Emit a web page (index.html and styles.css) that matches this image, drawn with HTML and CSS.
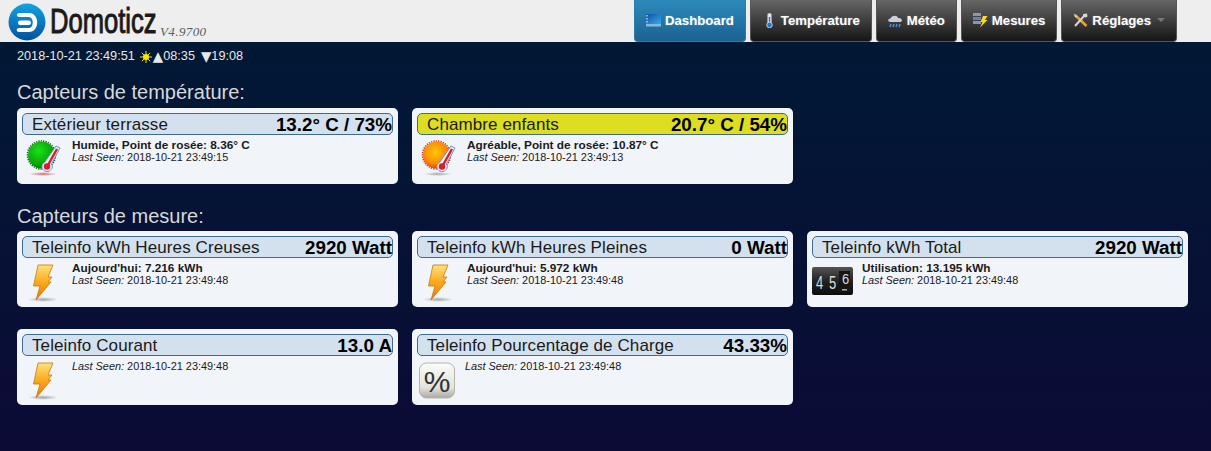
FILE: index.html
```html
<!DOCTYPE html>
<html>
<head>
  <title>Domoticz</title>
  <link rel="stylesheet" href="styles.css">
</head>
<body>
  <svg class="defs" width="0" height="0">
    <defs>
      <linearGradient id="boltFill" x1="0" y1="0" x2="0" y2="1">
        <stop offset="0" stop-color="#ffe27a"/>
        <stop offset="0.5" stop-color="#fca81c"/>
        <stop offset="1" stop-color="#e07a06"/>
      </linearGradient>
      <radialGradient id="shadowFill">
        <stop offset="0" stop-color="#8a8a8a" stop-opacity="0.75"/>
        <stop offset="1" stop-color="#8a8a8a" stop-opacity="0"/>
      </radialGradient>
      <radialGradient id="redShadow">
        <stop offset="0" stop-color="#d84040" stop-opacity="0.8"/>
        <stop offset="1" stop-color="#d84040" stop-opacity="0"/>
      </radialGradient>
      <radialGradient id="greenFill" cx="0.4" cy="0.35" r="0.7">
        <stop offset="0" stop-color="#1ee01a"/>
        <stop offset="0.7" stop-color="#06a806"/>
        <stop offset="1" stop-color="#036a10"/>
      </radialGradient>
      <radialGradient id="sunFill" cx="0.45" cy="0.4" r="0.65">
        <stop offset="0" stop-color="#ffc800"/>
        <stop offset="0.65" stop-color="#fb8a08"/>
        <stop offset="1" stop-color="#ec2a0c"/>
      </radialGradient>
      <linearGradient id="keyFill" x1="0" y1="0" x2="0" y2="1">
        <stop offset="0" stop-color="#fbfbf8"/>
        <stop offset="0.7" stop-color="#e3e3dd"/>
        <stop offset="1" stop-color="#a9a9a2"/>
      </linearGradient>
      <linearGradient id="meterFill" x1="0" y1="0" x2="0" y2="1">
        <stop offset="0" stop-color="#555"/>
        <stop offset="0.5" stop-color="#222"/>
        <stop offset="1" stop-color="#0c0c0c"/>
      </linearGradient>
      <linearGradient id="logoFill" x1="0" y1="0" x2="0" y2="1">
        <stop offset="0" stop-color="#12a4e4"/>
        <stop offset="1" stop-color="#03509c"/>
      </linearGradient>
      <linearGradient id="screenFill" x1="0" y1="0" x2="1" y2="1">
        <stop offset="0" stop-color="#0a4fa8"/>
        <stop offset="1" stop-color="#3fa6ea"/>
      </linearGradient>

      <symbol id="bolt" viewBox="0 0 40 40">
        <ellipse cx="17" cy="37.5" rx="15" ry="2.5" fill="url(#shadowFill)"/>
        <path d="M12 3 L27 3 L22 15 L26 15 L22 20 L25 20 L10 38 L14 24 L7.5 24 Z" fill="url(#boltFill)" stroke="#c87a10" stroke-width="0.8"/>
      </symbol>
      <symbol id="therm" viewBox="0 0 40 40">
        <path d="M30 7 L34 9 L25.5 25 C28 29 24.5 33 20.5 32.5 C16 32 14.5 27 17.5 24 L18.5 23.5 Z" fill="#e8eef7" stroke="#6f93c0" stroke-width="1"/>
        <path d="M31 10 L21.5 27" stroke="#d81e2a" stroke-width="2.4"/>
        <circle cx="21" cy="27.5" r="3.2" fill="#d81e2a"/>
      </symbol>
    </defs>
  </svg>

  <div class="topbar">
    <div class="brand">
      <svg class="brand-logo" viewBox="0 0 38 38" width="38" height="38">
        <circle cx="19" cy="19" r="18.5" fill="url(#logoFill)"/>
        <path d="M11 10 H21 C32 10 32 29 21 29 H11 C8 29 8 25 11 25 H21 C26 25 26 14 21 14 H11 C8.5 14 8.5 10 11 10 Z" fill="#fff"/>
        <rect x="10" y="17.5" width="13" height="4.5" rx="2.2" fill="#fff"/>
      </svg>
      <span class="brand-name">Domoticz</span>
      <span class="brand-version">V4.9700</span>
    </div>
    <div class="menu">
      <a class="tab tab-active" href="#">
        <svg class="tab-icon" viewBox="0 0 15 15">
          <rect x="0" y="1" width="15" height="10" fill="url(#screenFill)"/>
          <path d="M1 2 V10" stroke="#d5effc" stroke-width="1.2" stroke-dasharray="1.5 1.5"/>
          <rect x="0" y="11" width="15" height="2.5" fill="#83bbdd"/>
        </svg>
        Dashboard
      </a>
      <a class="tab" href="#">
        <svg class="tab-icon" viewBox="0 0 15 15">
          <rect x="5.5" y="0" width="4" height="11" rx="2" fill="#dfe8f2" stroke="#7fa0c8" stroke-width="0.8"/>
          <rect x="6.8" y="4" width="1.4" height="8" fill="#2a72c8"/>
          <circle cx="7.5" cy="12" r="2.8" fill="#2a72c8" stroke="#cfe0f0" stroke-width="0.8"/>
        </svg>
        Température
      </a>
      <a class="tab" href="#">
        <svg class="tab-icon" viewBox="0 0 15 15">
          <path d="M2.5 9 C-0.5 9 -0.5 5.5 2.5 5.5 C3.5 2 9.5 2 10 5 C14.5 4.5 15 9 12 9 Z" fill="#c8d0dc"/>
          <path d="M3 11 L2 14 M6 11 L5 14 M9 11 L8 14 M12 11 L11 14" stroke="#4a94e0" stroke-width="1.4"/>
        </svg>
        Météo
      </a>
      <a class="tab" href="#">
        <svg class="tab-icon" viewBox="0 0 15 15">
          <rect x="0" y="0" width="8" height="3" fill="#8a98a8"/>
          <rect x="0" y="4" width="8" height="3" fill="#5a88b8"/>
          <rect x="0" y="8" width="8" height="3" fill="#8a98a8"/>
          <path d="M10 3 L14.5 3 L12 7 L14.5 7 L7 14.5 L9.5 9 L7.5 9 Z" fill="#f6dc1c"/>
        </svg>
        Mesures
      </a>
      <a class="tab" href="#">
        <svg class="tab-icon" viewBox="0 0 15 15">
          <path d="M2 2 L13.5 13" stroke="#e8a418" stroke-width="2.6"/>
          <path d="M12 2 L2 13" stroke="#d8d8d8" stroke-width="2"/>
          <path d="M10 1 L14 0.5 L14.5 3.5 L12.5 4.5 L10 3 Z" fill="#d8d8d8"/>
          <path d="M0.5 0.5 L4.5 3.5 L2.5 4.5 Z" fill="#d8d8d8"/>
        </svg>
        Réglages
        <span class="caret"></span>
      </a>
    </div>
  </div>

  <div class="clock">
    <span>2018-10-21 23:49:51</span>
    <svg class="sun" viewBox="0 0 12 12" width="12" height="12">
      <circle cx="6" cy="6" r="3" fill="#ffe800"/>
      <path d="M6 0 V12 M0 6 H12 M1.8 1.8 L10.2 10.2 M10.2 1.8 L1.8 10.2" stroke="#ffe800" stroke-width="1"/>
    </svg>
    <span class="arrow">▲</span><span>08:35</span>
    <span class="arrow arrow-down">▼</span><span>19:08</span>
  </div>

  <h2 class="section-title first">Capteurs de température:</h2>
  <div class="cards">
    <div class="card">
      <div class="card-head"><span class="card-name">Extérieur terrasse</span><span class="card-value">13.2° C / 73%</span></div>
      <div class="card-body">
        <svg class="card-icon" viewBox="0 0 40 40">
          <ellipse cx="17" cy="35" rx="14" ry="2" fill="url(#redShadow)"/>
          <circle cx="15.5" cy="16" r="14" fill="none" stroke="#0a5a1a" stroke-width="1.6" stroke-dasharray="1.2 1.2"/>
          <circle cx="15.5" cy="16" r="13.5" fill="url(#greenFill)"/>
          <use href="#therm" width="40" height="40"/>
        </svg>
        <div class="card-text">
          <div class="card-status">Humide, Point de rosée: 8.36° C</div>
          <div class="card-seen"><em>Last Seen:</em> 2018-10-21 23:49:15</div>
        </div>
      </div>
    </div>
    <div class="card">
      <div class="card-head card-head-warn"><span class="card-name">Chambre enfants</span><span class="card-value">20.7° C / 54%</span></div>
      <div class="card-body">
        <svg class="card-icon" viewBox="0 0 40 40">
          <ellipse cx="17" cy="35" rx="14" ry="2" fill="url(#shadowFill)"/>
          <circle cx="15.5" cy="16" r="14" fill="none" stroke="#ee2410" stroke-width="1.6" stroke-dasharray="1.2 1.2"/>
          <circle cx="15.5" cy="16" r="13.5" fill="url(#sunFill)"/>
          <use href="#therm" width="40" height="40"/>
        </svg>
        <div class="card-text">
          <div class="card-status">Agréable, Point de rosée: 10.87° C</div>
          <div class="card-seen"><em>Last Seen:</em> 2018-10-21 23:49:13</div>
        </div>
      </div>
    </div>
  </div>

  <h2 class="section-title">Capteurs de mesure:</h2>
  <div class="cards">
    <div class="card">
      <div class="card-head"><span class="card-name">Teleinfo kWh Heures Creuses</span><span class="card-value">2920 Watt</span></div>
      <div class="card-body">
        <svg class="card-icon"><use href="#bolt"/></svg>
        <div class="card-text">
          <div class="card-status">Aujourd'hui: 7.216 kWh</div>
          <div class="card-seen"><em>Last Seen:</em> 2018-10-21 23:49:48</div>
        </div>
      </div>
    </div>
    <div class="card">
      <div class="card-head"><span class="card-name">Teleinfo kWh Heures Pleines</span><span class="card-value">0 Watt</span></div>
      <div class="card-body">
        <svg class="card-icon"><use href="#bolt"/></svg>
        <div class="card-text">
          <div class="card-status">Aujourd'hui: 5.972 kWh</div>
          <div class="card-seen"><em>Last Seen:</em> 2018-10-21 23:49:48</div>
        </div>
      </div>
    </div>
    <div class="card">
      <div class="card-head"><span class="card-name">Teleinfo kWh Total</span><span class="card-value">2920 Watt</span></div>
      <div class="card-body">
        <svg class="card-icon card-icon-wide" viewBox="0 0 41 28">
          <rect x="0" y="0" width="41" height="28" rx="2" fill="url(#meterFill)"/>
          <rect x="27" y="4" width="11" height="21" fill="#161616"/>
          <g class="meter-digits">
            <text transform="translate(4 22) scale(0.72 1)">4</text>
            <text transform="translate(17 22) scale(0.72 1)">5</text>
            <text transform="translate(30 17) scale(0.72 0.8)">6</text>
          </g>
          <rect x="30" y="22" width="5" height="1.5" fill="#aaa"/>
        </svg>
        <div class="card-text">
          <div class="card-status">Utilisation: 13.195 kWh</div>
          <div class="card-seen"><em>Last Seen:</em> 2018-10-21 23:49:48</div>
        </div>
      </div>
    </div>
    <div class="card">
      <div class="card-head"><span class="card-name">Teleinfo Courant</span><span class="card-value">13.0 A</span></div>
      <div class="card-body">
        <svg class="card-icon"><use href="#bolt"/></svg>
        <div class="card-text">
          <div class="card-seen"><em>Last Seen:</em> 2018-10-21 23:49:48</div>
        </div>
      </div>
    </div>
    <div class="card">
      <div class="card-head"><span class="card-name">Teleinfo Pourcentage de Charge</span><span class="card-value">43.33%</span></div>
      <div class="card-body">
        <svg class="card-icon card-icon-key" viewBox="0 0 38 40">
          <rect x="0.5" y="3" width="35" height="35" rx="7" fill="url(#keyFill)" stroke="#b5b5ae"/>
          <text class="key-sign" x="18" y="31.5">%</text>
        </svg>
        <div class="card-text">
          <div class="card-seen"><em>Last Seen:</em> 2018-10-21 23:49:48</div>
        </div>
      </div>
    </div>
  </div>
</body>
</html>
```

FILE: styles.css
```css
/* Pagina */
html {
  height: 100%;
}

body {
  font-family: "Liberation Sans", Arial, sans-serif;
  margin: 0;
  padding: 0;
  height: 451px;
  overflow: hidden;
  background: linear-gradient(to bottom, #001a35 0%, #0b0b36 100%);
  color: #fff;
}

.defs {
  display: block;
  height: 0;
}

/* Barra superior */
.topbar {
  display: flex;
  justify-content: space-between;
  height: 42px;
  background-color: #eeeeee;
}

.brand {
  display: flex;
  align-items: flex-start;
  padding: 3px 0 0 8px;
}

.brand-name {
  display: block;
  width: 107px;
  margin-left: 4px;
  font-size: 35px;
  line-height: 36px;
  color: #1a1a1a;
  -webkit-text-stroke: 1px #1a1a1a;
  white-space: nowrap;
  transform: scaleX(0.73);
  transform-origin: left center;
}

.brand-version {
  margin: 22px 0 0 3px;
  font-family: "Liberation Serif", serif;
  font-style: italic;
  font-size: 13px;
  line-height: 14px;
  letter-spacing: 0.4px;
  color: #555e66;
}

.menu {
  display: flex;
  gap: 4px;
  padding-right: 34px;
}

.tab {
  display: flex;
  align-items: center;
  gap: 4px;
  box-sizing: border-box;
  height: 42px;
  padding: 0 11px 1px;
  border: 1px solid #555;
  border-top: none;
  border-radius: 0 0 4px 4px;
  background: linear-gradient(to bottom, #666 0%, #151515 100%);
  color: #fff;
  font-size: 13.2px;
  font-weight: bold;
  text-decoration: none;
  text-shadow: 0 0 2px rgba(255, 255, 255, 0.3);
}

.tab-active {
  border-color: #2a7cae;
  background: linear-gradient(to bottom, #2c8abb 0%, #1a6292 100%);
}

.tab-icon {
  width: 15px;
  height: 15px;
}

.caret {
  width: 0;
  height: 0;
  margin-left: 2px;
  border-left: 4px solid transparent;
  border-right: 4px solid transparent;
  border-top: 4px solid #777;
}

/* Fecha y sol */
.clock {
  display: flex;
  align-items: center;
  padding: 7px 0 0 17px;
  height: 15px;
  font-size: 12.7px;
  line-height: 15px;
  color: #e8e8e8;
}

.sun {
  margin: 0 1px 0 5px;
}

.arrow {
  font-family: "DejaVu Sans", sans-serif;
  font-size: 13.5px;
}

.arrow-down {
  margin-left: 6px;
}

/* Secciones */
.section-title {
  margin: 22px 0 4px 17px;
  font-size: 20px;
  font-weight: normal;
  line-height: 21px;
  color: #d8d8d8;
}

.section-title.first {
  margin-top: 18px;
  margin-bottom: 5px;
}

.cards {
  display: grid;
  grid-template-columns: repeat(3, 381px);
  column-gap: 14px;
  row-gap: 22px;
  padding-left: 17px;
}

/* Tarjetas */
.card {
  box-sizing: border-box;
  height: 76px;
  padding: 5px 5px 0 5px;
  border-radius: 5px;
  background-color: #f1f4f9;
  color: #1a1a1a;
}

.card-head {
  display: flex;
  justify-content: space-between;
  align-items: center;
  box-sizing: border-box;
  height: 22px;
  padding: 1px 0 0 9px;
  border: 1px solid #3f6a91;
  border-radius: 5px;
  background-color: #d3e1ef;
}

.card-head-warn {
  background-color: #dddd22;
}

.card-name {
  font-size: 17px;
  letter-spacing: 0.1px;
  color: #1a1a1a;
}

.card-value {
  font-size: 18.8px;
  font-weight: bold;
  color: #000;
}

.card-body {
  display: flex;
  padding: 4px 0 0 0;
}

.card-icon {
  flex: none;
  width: 40px;
  height: 40px;
  margin-left: 4px;
  margin-right: 6px;
}

.card-icon-wide {
  width: 41px;
  height: 28px;
  margin: 5px 9px 0 0;
}

.card-icon-key {
  width: 38px;
  margin-left: 2px;
  margin-right: 8px;
}

.card-text {
  line-height: 12px;
}

.card-status {
  font-size: 11.8px;
  font-weight: bold;
}

.card-seen {
  font-size: 10.9px;
}

.card-seen em {
  font-style: italic;
}

.meter-digits text {
  font-size: 18px;
  fill: #ddd;
}

.key-sign {
  font-size: 30px;
  text-anchor: middle;
  fill: #333;
}
```
